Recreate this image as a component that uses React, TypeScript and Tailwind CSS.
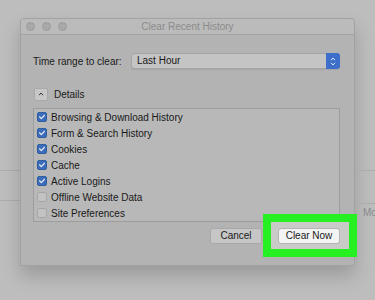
import { FaCheck } from "react-icons/fa";

export default function App() {
  const items = [
    { label: "Browsing & Download History", checked: true },
    { label: "Form & Search History", checked: true },
    { label: "Cookies", checked: true },
    { label: "Cache", checked: true },
    { label: "Active Logins", checked: true },
    { label: "Offline Website Data", checked: false },
    { label: "Site Preferences", checked: false },
  ];

  return (
    <div
      className="w-[375px] h-[300px] overflow-hidden bg-[#bdbdbd] flex pt-[18px] text-[#191919]"
      style={{ fontFamily: '"Liberation Sans", Arial, sans-serif' }}
    >
      {/* window behind, left edge */}
      <div className="w-[20px] shrink-0 flex flex-col">
        <div className="mt-[152px] border-t border-[#acacac] h-[30px]" />
        <div className="border-t border-[#acacac]" />
      </div>

      {/* dialog */}
      <div className="w-[335px] h-[248px] shrink-0 flex flex-col bg-[#b3b3b3] border border-[#a2a2a2] rounded-t-[4px] shadow-[0_10px_18px_rgba(0,0,0,0.18)]">
        <div className="h-[16px] grid grid-cols-[1fr_auto_1fr] items-center px-[5px] bg-[#bbbbbb] border-b border-[#a4a4a4] rounded-t-[4px]">
          <div className="flex gap-[7px]">
            <span className="w-[9px] h-[9px] rounded-full bg-[#a9a9a9] border border-[#9c9c9c]" />
            <span className="w-[9px] h-[9px] rounded-full bg-[#a9a9a9] border border-[#9c9c9c]" />
            <span className="w-[9px] h-[9px] rounded-full bg-[#a9a9a9] border border-[#9c9c9c]" />
          </div>
          <div className="text-[10px] text-[#8b8b8b]">Clear Recent History</div>
          <div />
        </div>

        <div className="flex flex-col pl-[12px] pr-[14px]">
          <div className="mt-[18px] flex items-center h-[16px]">
            <span className="text-[10px] w-[98px]">Time range to clear:</span>
            <div className="flex-1 flex h-[16px] rounded-[3px] border border-[#a5a5a5] bg-[#c4c4c4] shadow-[0_1px_1px_rgba(0,0,0,0.08)]">
              <span className="flex-1 text-[10px] leading-[14px] pl-[5px]">Last Hour</span>
              <span className="w-[14px] -my-px -mr-px rounded-r-[3px] bg-[#3d6ec9] flex flex-col items-center justify-center gap-[1px]">
                <svg width="6" height="4" viewBox="0 0 6 4"><path d="M1 3.2 L3 1 L5 3.2" stroke="#dfe8f7" strokeWidth="1" fill="none" /></svg>
                <svg width="6" height="4" viewBox="0 0 6 4"><path d="M1 0.8 L3 3 L5 0.8" stroke="#dfe8f7" strokeWidth="1" fill="none" /></svg>
              </span>
            </div>
          </div>

          <div className="mt-[18px] flex items-center h-[14px] pl-px">
            <span className="w-[14px] h-[13px] rounded-[2px] bg-[#c7c7c7] border border-[#a9a9a9] flex items-center justify-center">
              <svg width="6" height="4" viewBox="0 0 6 4"><path d="M1 3.2 L3 1 L5 3.2" stroke="#333" strokeWidth="1" fill="none" /></svg>
            </span>
            <span className="ml-[6px] text-[10px]">Details</span>
          </div>

          <div className="mt-[7px] border border-[#9d9d9d] bg-[#b8b8b8] flex flex-col">
            {items.map((item, i) => (
              <div key={i} className="h-[16px] flex items-center pl-[3px]">
                {item.checked ? (
                  <span className="w-[10px] h-[10px] rounded-[2px] bg-[#3b6cba] border border-[#335d9f] flex items-center justify-center">
                    <FaCheck className="text-[6px] text-[#e6eef9]" />
                  </span>
                ) : (
                  <span className="w-[10px] h-[10px] rounded-[2px] bg-[#c2c2c2] border border-[#a6a6a6]" />
                )}
                <span className="ml-[4px] text-[10px]">{item.label}</span>
              </div>
            ))}
          </div>

          <div className="-mt-[8px] flex items-center justify-end -mr-[17px]">
            <span className="w-[52px] h-[16px] rounded-[3px] bg-[#c6c6c6] border border-[#a8a8a8] text-[10px] flex items-center justify-center">
              Cancel
            </span>
            <div className="ml-[1px] w-[94px] h-[43px] bg-[#26f022] p-[8px]">
              <div className="w-full h-full bg-[#c9cbc8] flex items-center pl-[7px]">
                <span className="w-[62px] h-[16px] rounded-[3px] bg-[#f3f3f3] border border-[#b4b4b4] text-[10px] flex items-center justify-center">
                  Clear Now
                </span>
              </div>
            </div>
          </div>
        </div>
      </div>

      {/* window behind, right edge */}
      <div className="flex-1 flex flex-col">
        <div className="mt-[152px] border-t border-[#acacac] h-[33px]" />
        <div className="border-t border-[#acacac] pl-[8px] pt-[1px] text-[10px] text-[#8a8a8a] whitespace-nowrap">Mo</div>
      </div>
    </div>
  );
}
